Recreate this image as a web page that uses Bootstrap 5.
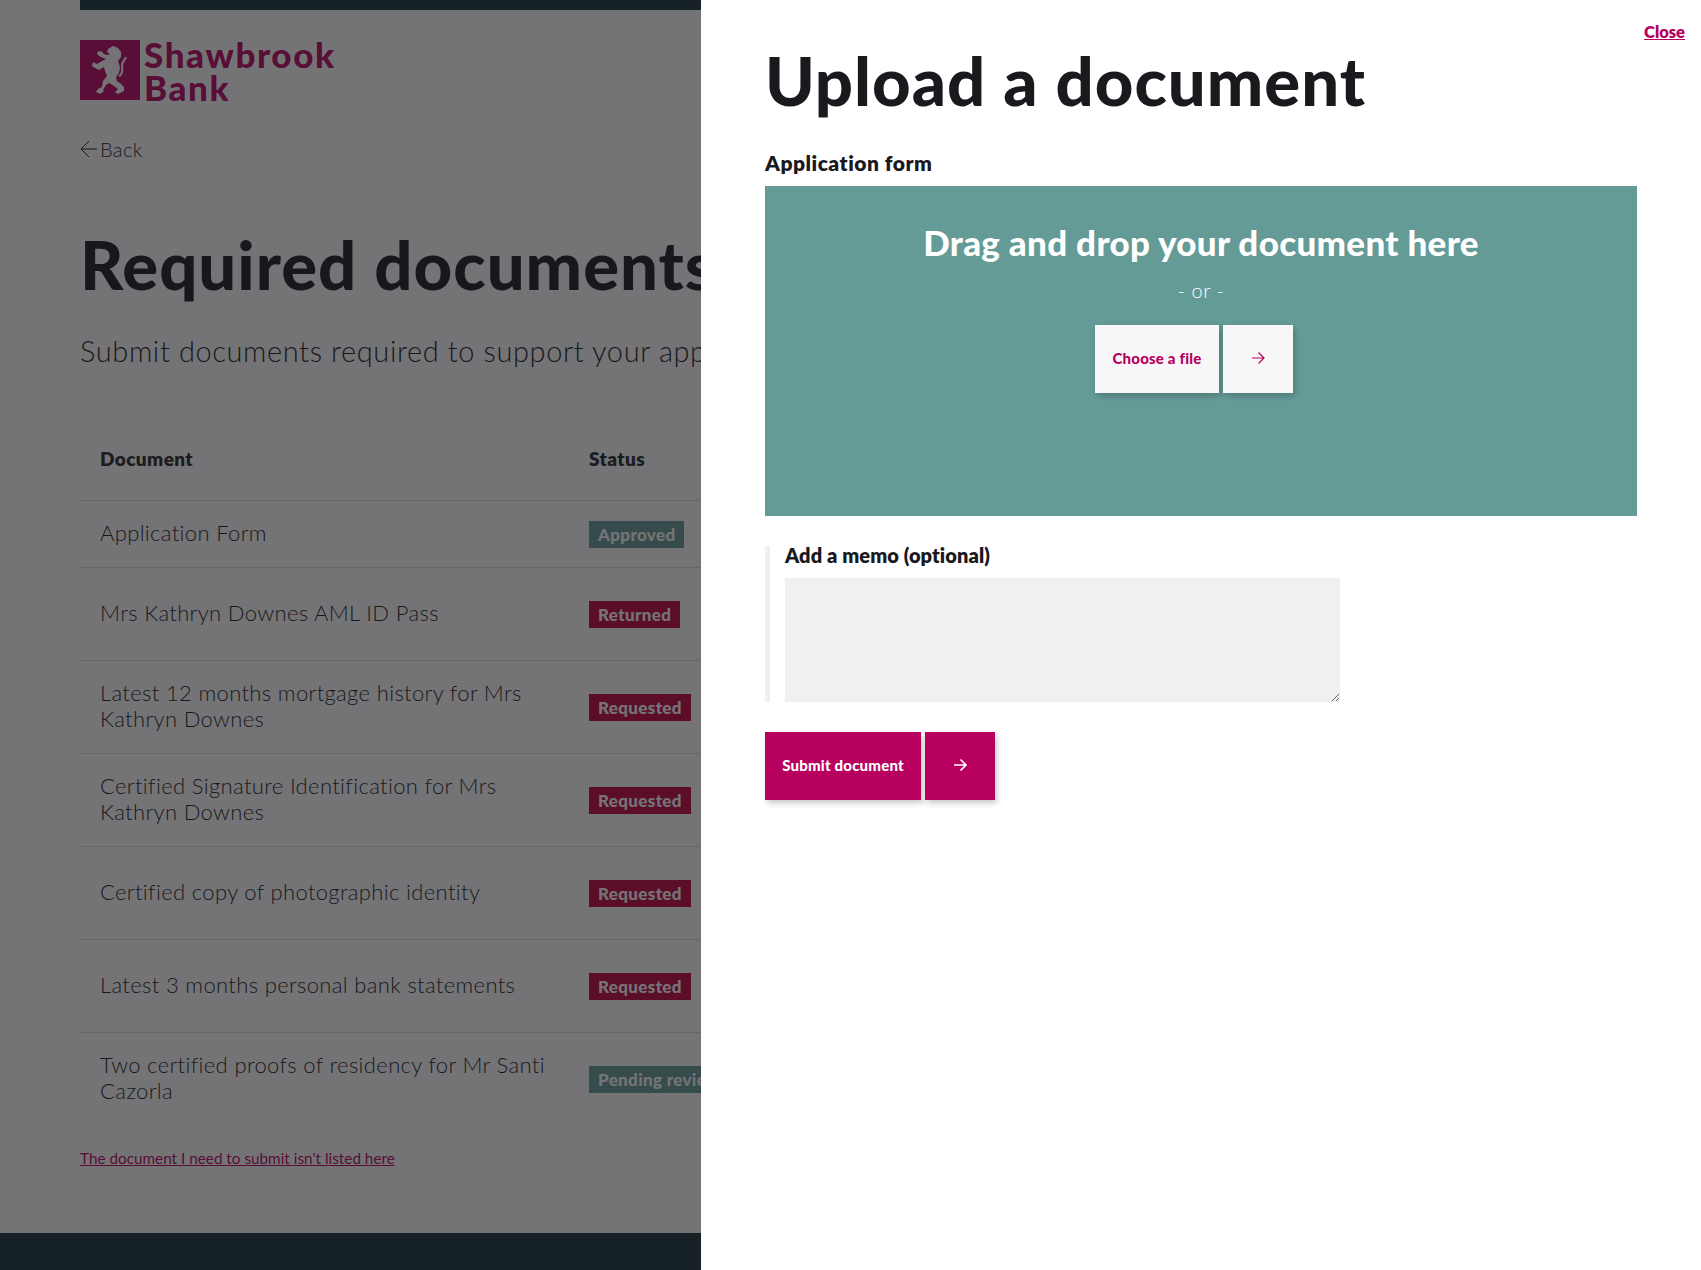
<!DOCTYPE html>
<html lang="en"><head><meta charset="utf-8"><title>Upload a document</title>
<link href="https://cdn.jsdelivr.net/npm/bootstrap@5.3.0/dist/css/bootstrap.min.css" rel="stylesheet">
<style>
html,body{height:100%;overflow:hidden}
body{font-family:Lato,"Liberation Sans",sans-serif;color:#1a1a1e;background:#fff}
.pg-wrap{height:1270px;display:flex;flex-direction:column}
.pg-main{flex:1 0 auto;padding-left:80px;width:1000px}
.top-strip{height:10px;background:#163338}
.pg-foot{height:37px;background:#163338;flex:none}
.logo-row{margin-top:30px;height:60px;gap:4px}
.logo-sq{width:60px;height:60px;background:#b8005f;display:block;flex:none}
.logo-txt{color:#b8005f;font-weight:900;font-size:35px;line-height:33px;letter-spacing:1.6px;padding-top:1px}
.back-l{margin-top:36px;height:26px;font-size:20px;font-weight:300;color:#1a1a1e;text-decoration:none;gap:2px;letter-spacing:.4px}
.ttl{font-weight:900;font-size:67px;line-height:78px;margin:61px 0 0;white-space:nowrap;color:#1a1a1e;letter-spacing:1px}
.sub-l{font-size:29px;font-weight:300;line-height:36px;margin:30px 0 0;white-space:nowrap;letter-spacing:.6px}
.doc-tbl{width:780px;margin:43px 0 0;table-layout:fixed;--bs-table-bg:transparent}
.doc-tbl th{font-size:19px;font-weight:800;height:88px;padding:6px 20px 0;vertical-align:middle;border-bottom:1px solid #dcdcdc;letter-spacing:.4px}
.doc-tbl td{font-size:22px;font-weight:300;line-height:26px;padding:0 20px 2px;height:93px;vertical-align:middle;border-bottom:1px solid #dcdcdc;color:#1a1a1e;letter-spacing:.35px}
.doc-tbl th:first-child,.doc-tbl td:first-child{width:489px}
.doc-tbl td:first-child{padding-right:8px}
.doc-tbl tr.low td{height:67px}
.doc-tbl tr:last-child td{border-bottom:0}
.stat{display:inline-block;height:27px;line-height:27px;padding:0 9px;font-size:17px;font-weight:900;color:#fff;white-space:nowrap;position:relative;top:2px;letter-spacing:.35px;vertical-align:top}
.stat-ok{background:#659b97}.stat-bad{background:#c4003d}
.miss-l{display:block;margin-top:22px;font-size:15.3px;font-weight:400;color:#b8005f}
.veil{position:fixed;inset:0;background:rgba(24,24,27,.6);z-index:1040}
.side{position:fixed;top:0;bottom:0;left:701px;width:1000px;background:#fff;padding:0 64px;z-index:1050}
.close-l{position:absolute;top:20px;right:16px;font-size:16.5px;font-weight:800;color:#b8005f}
.side h2{font-weight:900;font-size:67px;line-height:78px;margin:41px 0 0;color:#1a1a1e;letter-spacing:1px}
.lab{display:block;font-size:21px;font-weight:800;line-height:24px;margin:0;letter-spacing:.5px}
.lab-app{margin-top:32px}
.drop{background:#659b97;height:330px;margin-top:11px;color:#fff;text-align:center;padding-top:35px}
.drop h3{font-weight:900;font-size:35px;line-height:42px;margin:0;letter-spacing:.3px}
.drop p{font-size:20px;font-weight:300;line-height:24px;margin:15px 0 0;letter-spacing:.6px}
.btn-sq{height:68px;border-radius:0;border:0;font-weight:900;font-size:15px;letter-spacing:.2px;box-shadow:2px 3px 6px rgba(0,0,0,.22);display:flex;align-items:center;justify-content:center;padding:0 0 2px}
.btn-sq:hover{box-shadow:2px 3px 6px rgba(0,0,0,.22)}
.btn-lt{background:#f7f7f7;color:#b8005f}
.btn-dk{background:#b8005f;color:#fff}
.w-choose{width:124px}.w-arr{width:70px}.w-sub{width:156px}
.gap-4px{gap:4px}
.file-row{margin-top:23px;padding-right:14px}
.memo{margin-top:30px;border-left:5px solid #f0f0f0;padding-left:15px;height:156px}
.memo textarea{display:block;width:555px;height:124px;margin-top:14px;background:#f0f0f0;border:0;border-radius:0;padding:8px}
.memo .lab{font-size:20px;line-height:18px;letter-spacing:.1px}
.sub-row{margin-top:30px}
</style></head>
<body>
<div class="pg-wrap">
 <div class="pg-main">
  <div class="top-strip"></div>
  <div class="logo-row d-flex align-items-center">
   <svg class="logo-sq" viewBox="0 0 60 60" aria-hidden="true"><path fill="#fff" d="M28 9L33 6L38 8L41 12L41 17L38 21L40 27L39 33L36 37L37 41L41 44L44 47L44 51L38 54L35 52L38 49L34 46L29 43L26 45L23 50L24 51L20 54L16 52L18 49L22 47L23 41L27 36L25 31L24 27L19 30L15 28L12 26L13 22L17 24L22 21L26 19L21 17L18 15L17 12L21 11L24 14L27 15L30 14L27 12Z"/><path fill="none" stroke="#fff" stroke-width="2" d="M39 36C44 34 42 28 42 25C42 22 45 20 46 17"/></svg>
   <div class="logo-txt">Shawbrook<br>Bank</div>
  </div>
  <a class="back-l d-inline-flex align-items-center" href="#"><svg width="18" height="18" viewBox="0 0 18 18" fill="none" stroke="#1a1a1e" stroke-width="1"><path d="M17 9H1M9 1L1 9l8 8"/></svg>Back</a>
  <h1 class="ttl">Required documents</h1>
  <p class="sub-l">Submit documents required to support your application</p>
  <table class="table doc-tbl">
   <thead><tr><th>Document</th><th>Status</th></tr></thead>
   <tbody>
    <tr class="low"><td>Application Form</td><td><span class="stat stat-ok">Approved</span></td></tr>
    <tr><td>Mrs Kathryn Downes AML ID Pass</td><td><span class="stat stat-bad">Returned</span></td></tr>
    <tr><td>Latest 12 months mortgage history for Mrs Kathryn Downes</td><td><span class="stat stat-bad">Requested</span></td></tr>
    <tr><td>Certified Signature Identification for Mrs Kathryn Downes</td><td><span class="stat stat-bad">Requested</span></td></tr>
    <tr><td>Certified copy of photographic identity</td><td><span class="stat stat-bad">Requested</span></td></tr>
    <tr><td>Latest 3 months personal bank statements</td><td><span class="stat stat-bad">Requested</span></td></tr>
    <tr><td>Two certified proofs of residency for Mr Santi Cazorla</td><td><span class="stat stat-ok">Pending review</span></td></tr>
   </tbody>
  </table>
  <a class="miss-l" href="#">The document I need to submit isn't listed here</a>
 </div>
 <div class="pg-foot"></div>
</div>
<div class="veil"></div>
<aside class="side">
 <a class="close-l" href="#">Close</a>
 <h2>Upload a document</h2>
 <label class="lab lab-app">Application form</label>
 <div class="drop">
  <h3>Drag and drop your document here</h3>
  <p>- or -</p>
  <div class="file-row d-flex justify-content-center gap-4px">
   <button type="button" class="btn btn-sq btn-lt w-choose">Choose a file</button>
   <button type="button" class="btn btn-sq btn-lt w-arr" aria-label="Choose a file"><svg width="14" height="14" viewBox="0 0 14 14" fill="none" stroke="#b8005f" stroke-width="1.2"><path d="M1 7h12M7.5 1.5L13 7l-5.5 5.5"/></svg></button>
  </div>
 </div>
 <div class="memo">
  <label class="lab" for="memo-f">Add a memo (optional)</label>
  <textarea id="memo-f"></textarea>
 </div>
 <div class="sub-row d-flex gap-4px">
  <button type="button" class="btn btn-sq btn-dk w-sub">Submit document</button>
  <button type="button" class="btn btn-sq btn-dk w-arr" aria-label="Submit document"><svg width="14" height="14" viewBox="0 0 14 14" fill="none" stroke="#fff" stroke-width="1.6"><path d="M1 7h12M7.5 1.5L13 7l-5.5 5.5"/></svg></button>
 </div>
</aside>
<script src="https://cdn.jsdelivr.net/npm/bootstrap@5.3.0/dist/js/bootstrap.bundle.min.js"></script>
</body></html>
